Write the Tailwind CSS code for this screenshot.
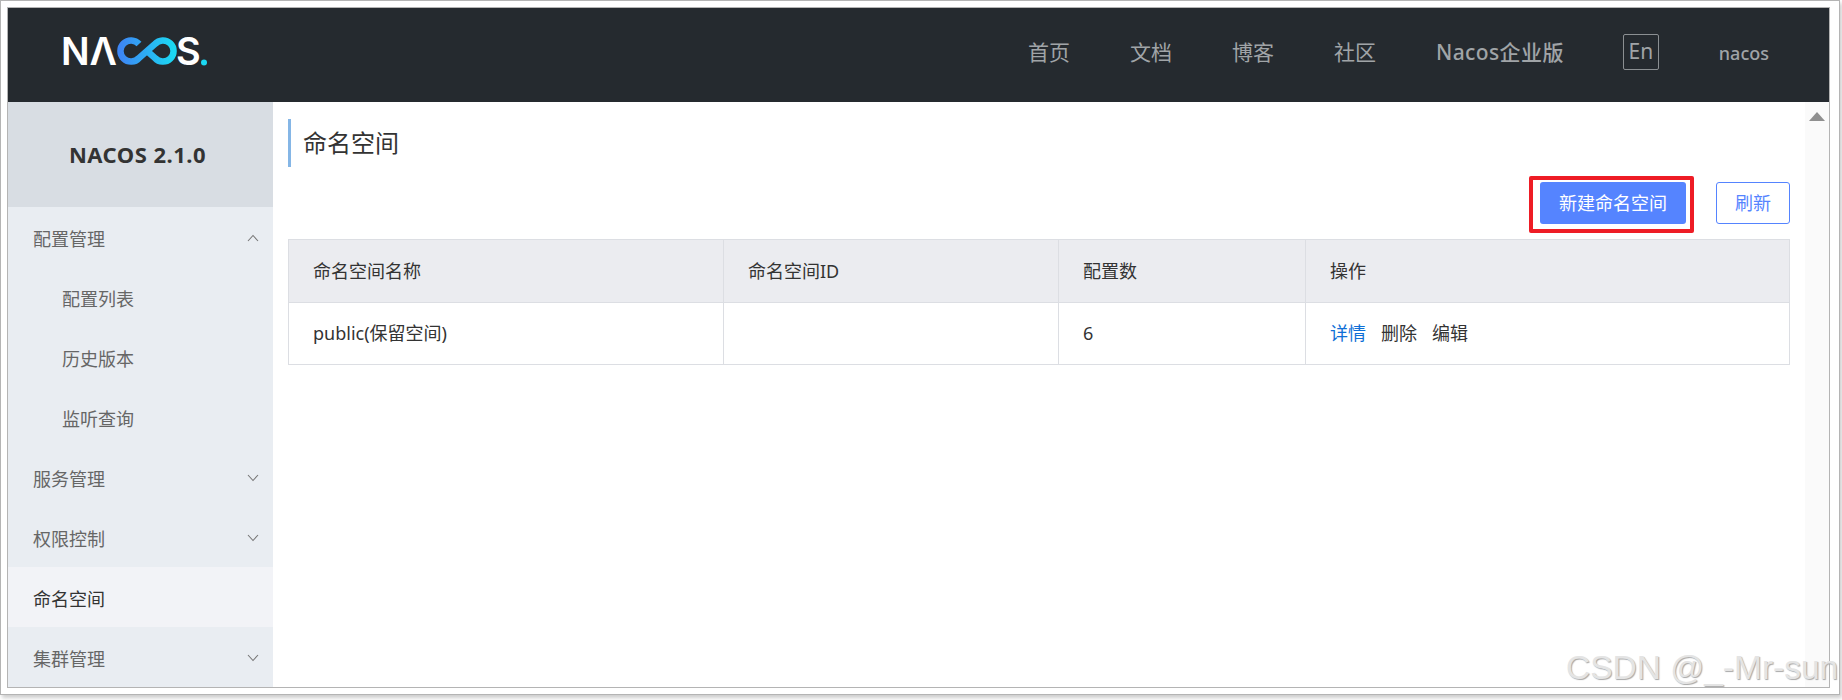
<!DOCTYPE html>
<html lang="zh-CN">
  <head>
    <meta charset="UTF-8" />
    <title>Nacos</title>
    <script src="https://cdn.jsdelivr.net/npm/@tailwindcss/browser@4"></script>
  </head>
  <body class="bg-white h-[700px] overflow-hidden font-['Noto_Sans','Noto_Sans_CJK_SC',sans-serif]">
    <div class="relative w-[1840px] h-[695px] border border-[#b4b4b4] pt-[6px] pb-[6px] pl-[6px] pr-[9px] shadow-[2px_3px_4px_rgba(0,0,0,0.2)]">
      <div class="h-full border border-[#b4b4b4] flex flex-col overflow-hidden">
        <!-- header -->
        <header class="h-[94px] shrink-0 bg-[#252a2f] flex items-center justify-between pl-[51px] pr-[60px]">
          <svg width="150" height="44" viewBox="-4 -7 150 44" class="-mt-[7px]">
            <defs>
              <linearGradient id="inf" x1="0" y1="0" x2="1" y2="0">
                <stop offset="0" stop-color="#3d86f5" />
                <stop offset="1" stop-color="#1bd8f2" />
              </linearGradient>
            </defs>
            <text x="-2" y="28" font-family="Inter" font-weight="600" font-size="38" fill="#fff" textLength="56" lengthAdjust="spacingAndGlyphs">NΛ</text>
            <path d="M76 7A10.6 10.6 0 1 0 76 21L92 7A10.6 10.6 0 1 1 92 21L86 15.7" fill="none" stroke="url(#inf)" stroke-width="6.5" />
            <text x="113" y="28" font-family="Inter" font-weight="600" font-size="38" fill="#fff">S</text>
            <circle cx="141" cy="25.5" r="3" fill="#1bd8f2" />
          </svg>
          <nav class="flex items-center text-[#a0a4a7] text-[21px] -mt-[4px]">
            <a class="w-[42px] text-center whitespace-nowrap">首页</a>
            <a class="w-[42px] ml-[60px] text-center whitespace-nowrap">文档</a>
            <a class="w-[42px] ml-[60px] text-center whitespace-nowrap">博客</a>
            <a class="w-[42px] ml-[60px] text-center whitespace-nowrap">社区</a>
            <a class="ml-[60px] whitespace-nowrap font-medium tracking-[0.4px]">Nacos企业版</a>
            <span class="ml-[59px] w-[36px] h-[36px] border border-[#8b8f92] rounded-[2px] flex items-center justify-center -mt-[2px]">En</span>
            <span class="ml-[60px] text-[18px] font-medium">nacos</span>
          </nav>
        </header>

        <div class="flex-1 flex min-h-0">
          <!-- sidebar -->
          <aside class="w-[265px] shrink-0 bg-[#e9edf2] text-[18px] text-[#666]">
            <div class="h-[105px] bg-[#d8dde3] flex items-center justify-center pr-[6px] text-[22px] tracking-[0.5px] font-bold text-[#333]">NACOS 2.1.0</div>
            <div class="h-[60px] pt-[4px] pl-[25px] pr-[14px] flex items-center justify-between">
              配置管理
              <svg width="12" height="8" viewBox="0 0 12 8" class="-mt-[3px]"><polyline points="1,7 6,1.5 11,7" fill="none" stroke="#777" stroke-width="1.1" /></svg>
            </div>
            <div class="h-[60px] pt-[4px] pl-[54px] flex items-center">配置列表</div>
            <div class="h-[60px] pt-[4px] pl-[54px] flex items-center">历史版本</div>
            <div class="h-[60px] pt-[4px] pl-[54px] flex items-center">监听查询</div>
            <div class="h-[60px] pt-[4px] pl-[25px] pr-[14px] flex items-center justify-between">
              服务管理
              <svg width="12" height="8" viewBox="0 0 12 8" class="-mt-[3px]"><polyline points="1,1 6,6.5 11,1" fill="none" stroke="#777" stroke-width="1.1" /></svg>
            </div>
            <div class="h-[60px] pt-[4px] pl-[25px] pr-[14px] flex items-center justify-between">
              权限控制
              <svg width="12" height="8" viewBox="0 0 12 8" class="-mt-[3px]"><polyline points="1,1 6,6.5 11,1" fill="none" stroke="#777" stroke-width="1.1" /></svg>
            </div>
            <div class="h-[60px] pt-[4px] pl-[25px] flex items-center bg-[#f2f3f7] text-[#333]">命名空间</div>
            <div class="h-[60px] pt-[4px] pl-[25px] pr-[14px] flex items-center justify-between">
              集群管理
              <svg width="12" height="8" viewBox="0 0 12 8" class="-mt-[3px]"><polyline points="1,1 6,6.5 11,1" fill="none" stroke="#777" stroke-width="1.1" /></svg>
            </div>
          </aside>

          <!-- main -->
          <main class="flex-1 flex min-w-0">
            <div class="flex-1 px-[15px] pt-[17px] min-w-0">
              <h1 class="h-[48px] border-l-[3px] border-[#85b6e6] pl-[12px] flex items-center text-[24px] text-[#333]">命名空间</h1>
              <div class="mt-[15px] flex justify-end gap-[30px]">
                <div class="relative">
                  <button class="w-[146px] h-[42px] rounded-[3px] bg-[#5584ff] text-white text-[18px]">新建命名空间</button>
                  <div class="absolute -left-[11px] -right-[8px] -top-[6px] -bottom-[9px] border-4 border-[#ee1c25] rounded-[2px]"></div>
                </div>
                <button class="w-[74px] h-[42px] rounded-[3px] border border-[#5584ff] text-[#5584ff] bg-white text-[18px]">刷新</button>
              </div>
              <table class="mt-[15px] w-full table-fixed border-collapse text-[18px] text-[#333] text-left">
                <colgroup>
                  <col class="w-[435px]" />
                  <col class="w-[335px]" />
                  <col class="w-[247px]" />
                  <col />
                </colgroup>
                <thead class="bg-[#ebecf0]">
                  <tr class="h-[63px]">
                    <th class="border border-[#dcdee3] pl-[24px] font-normal">命名空间名称</th>
                    <th class="border border-[#dcdee3] pl-[24px] font-normal">命名空间ID</th>
                    <th class="border border-[#dcdee3] pl-[24px] font-normal">配置数</th>
                    <th class="border border-[#dcdee3] pl-[24px] font-normal">操作</th>
                  </tr>
                </thead>
                <tbody>
                  <tr class="h-[62px]">
                    <td class="border border-[#dcdee3] pl-[24px]">public(保留空间)</td>
                    <td class="border border-[#dcdee3] pl-[24px]"></td>
                    <td class="border border-[#dcdee3] pl-[24px]">6</td>
                    <td class="border border-[#dcdee3] pl-[24px]">
                      <div class="flex gap-[15px]">
                        <a class="text-[#0f6fd6]">详情</a>
                        <span>删除</span>
                        <span>编辑</span>
                      </div>
                    </td>
                  </tr>
                </tbody>
              </table>
            </div>
            <div class="w-[24px] shrink-0 bg-[#fafafa] pt-[10px] flex justify-center">
              <svg width="16" height="9" viewBox="0 0 16 9"><polygon points="8,0 16,9 0,9" fill="#8f8f8f" /></svg>
            </div>
          </main>
        </div>
      </div>
    </div>
    <!-- watermark -->
    <div class="absolute left-[1566px] top-[648px] whitespace-nowrap font-['Liberation_Sans',sans-serif] text-[33.5px] leading-[40px] text-[#e4e4e4] [text-shadow:1px_1px_1px_#a8a8a8]">CSDN @_-Mr-sun</div>
  </body>
</html>
